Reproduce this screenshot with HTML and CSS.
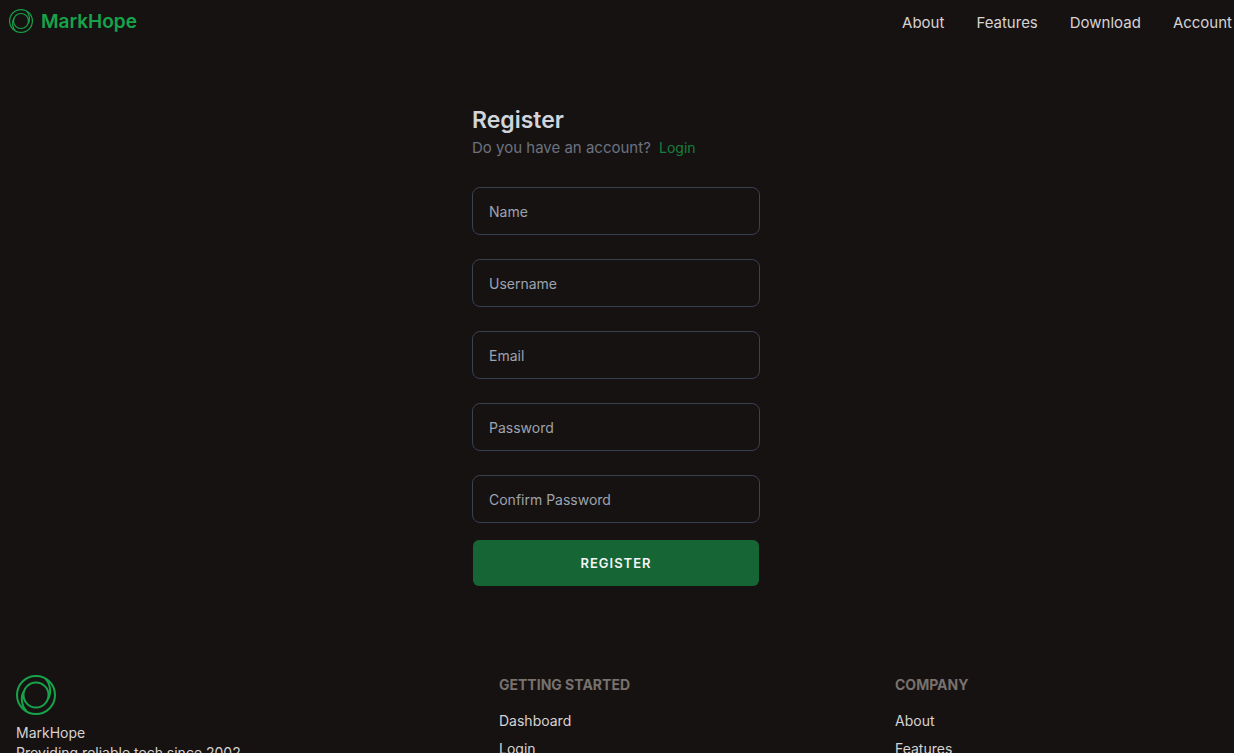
FILE: index.html
```html
<!DOCTYPE html>
<html lang="en">
<head>
	<meta charset="utf-8">
	<meta name="viewport" content="width=device-width, initial-scale=1">
	<title>MarkHope</title>
	<link rel="stylesheet" href="styles.css">
</head>
<body>
	<header class="navbar">
		<a class="brand" href="#">
			<svg class="brand-logo" viewBox="0 0 40 40" fill="none" stroke="currentColor" stroke-width="2">
				<circle cx="20" cy="20" r="19"/>
				<circle cx="20" cy="20" r="12.5"/>
				<path d="M29.500 4C34 8 36 18 32 24"/>
				<path d="M10.500 36C6 32 4 22 8 16"/>
			</svg>
			MarkHope
		</a>
		<nav class="navitem">
			<a href="#">About</a>
			<a href="#">Features</a>
			<a href="#">Download</a>
			<a href="#">Account</a>
		</nav>
	</header>

	<main class="frame">
		<form class="register-form">
			<h1>Register</h1>
			<p class="have-account">Do you have an account? <a href="#">Login</a></p>
			<input type="text" name="name" placeholder="Name" aria-label="Name">
			<input type="text" name="username" placeholder="Username" aria-label="Username">
			<input type="email" name="email" placeholder="Email" aria-label="Email">
			<input type="password" name="password" placeholder="Password" aria-label="Password">
			<input type="password" name="confirm" placeholder="Confirm Password" aria-label="Confirm Password">
			<button type="submit">REGISTER</button>
		</form>
	</main>

	<footer class="footer">
		<div class="footer-col footer-about">
			<svg class="footer-logo" viewBox="0 0 40 40" fill="none" stroke="currentColor" stroke-width="2">
				<circle cx="20" cy="20" r="19"/>
				<circle cx="20" cy="20" r="12.5"/>
				<path d="M29.500 4C34 8 36 18 32 24"/>
				<path d="M10.500 36C6 32 4 22 8 16"/>
			</svg>
			<p>MarkHope<br>Providing reliable tech since 2002</p>
		</div>
		<div class="footer-col">
			<h2>GETTING STARTED</h2>
			<a href="#">Dashboard</a>
			<a href="#">Login</a>
		</div>
		<div class="footer-col">
			<h2>COMPANY</h2>
			<a href="#">About</a>
			<a href="#">Features</a>
		</div>
	</footer>
</body>
</html>
```
FILE: styles.css
```css
*{
	margin: 0;
	padding: 0;
	box-sizing: border-box;
}
html{
	height: 100%;
	overflow: hidden;
}
body{
	height: 100%;
	overflow: hidden;
	background-color: #171212;
	color: #d6d3d1;
	font-family: Inter, "Liberation Sans", sans-serif;
	font-size: 15px;
	line-height: 24px;
}
a{
	color: inherit;
	text-decoration: none;
}
.navbar{
	display: flex;
	justify-content: space-between;
	align-items: center;
	height: 44px;
	padding: 0 2px 0 8px;
}
.brand{
	display: flex;
	align-items: center;
	gap: 7px;
	color: #16a34a;
	font-size: 19px;
	font-weight: 600;
}
.brand-logo{
	width: 26px;
	height: 26px;
	padding: 0 1px 2px;
}
.navitem{
	display: flex;
	gap: 32px;
	padding-top: 2px;
}
.frame{
	display: flex;
	justify-content: center;
	padding: 60px 0 48px;
}
.register-form{
	display: flex;
	flex-direction: column;
	width: 288px;
	margin-right: 2px;
}
.register-form h1{
	color: #d1d5db;
	font-size: 23px;
	font-weight: 600;
	line-height: 32px;
}
.have-account{
	margin-bottom: 27px;
	color: #6b7280;
}
.have-account a{
	margin-left: 4px;
	color: #15803d;
	font-size: 14px;
}
.register-form input{
	height: 48px;
	margin-bottom: 24px;
	padding: 0 16px;
	border: 1px solid #374151;
	border-radius: 8px;
	background-color: transparent;
	color: #d1d5db;
	font-family: inherit;
	font-size: 14px;
}
.register-form input::placeholder{
	color: #9ca3af;
}
.register-form button{
	height: 46px;
	margin: -7px 1px 0;
	border: none;
	border-radius: 6px;
	background-color: #166534;
	color: #f3f4f6;
	font-family: inherit;
	font-size: 13px;
	font-weight: 600;
	letter-spacing: 1px;
}
.footer{
	display: grid;
	grid-template-columns: 467fr 380fr 323fr;
	column-gap: 16px;
	padding: 40px 16px;
	border-top: 1px solid #151010;
	font-size: 14px;
	line-height: 20px;
}
.footer-col{
	display: grid;
	justify-items: start;
	align-content: start;
	gap: 8px;
}
.footer-col h2{
	margin-bottom: 8px;
	color: #78716c;
	font-size: 14px;
	font-weight: 700;
}
.footer-logo{
	width: 40px;
	height: 40px;
	color: #16a34a;
}
```
